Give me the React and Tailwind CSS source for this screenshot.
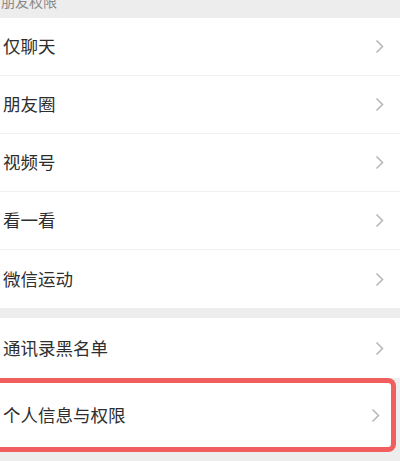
const font = { fontFamily: '"Noto Sans CJK SC", "Noto Sans", sans-serif' };

const Chevron = () => (
  <svg width="9" height="15" viewBox="0 0 9 15" className="shrink-0">
    <polyline points="1.5,1.5 7.5,7.5 1.5,13.5" fill="none" stroke="#b8b8b8" strokeWidth="1.6" />
  </svg>
);

const Row = ({ label, last }) => (
  <div className={`flex h-[58px] items-center justify-between bg-white pl-[3px] pr-[16px] ${last ? '' : 'border-b border-[#f2f2f2]'}`}>
    <span className="text-[17.5px] text-[#2e2e2e]">{label}</span>
    <Chevron />
  </div>
);

export default function App() {
  const group1 = ['仅聊天', '朋友圈', '视频号', '看一看', '微信运动'];

  return (
    <div className="h-[461px] w-[400px] overflow-hidden bg-[#ededed]" style={font}>
      {/* Section header, cut at the top */}
      <div className="h-[18px] overflow-hidden">
        <div className="-mt-[9px] pl-[1px] text-[14px] leading-[20px] text-[#8a8a8a]">朋友权限</div>
      </div>

      <div className="flex flex-col">
        {group1.map((l, i) => (
          <Row key={l} label={l} last={i === group1.length - 1} />
        ))}
      </div>

      <div className="h-[10px]" />

      <div className="flex h-[60px] items-center justify-between bg-white pl-[3px] pr-[16px]">
        <span className="text-[17.5px] text-[#2e2e2e]">通讯录黑名单</span>
        <Chevron />
      </div>

      <div className="mr-[4px] flex h-[74px] items-center justify-between rounded-r-[8px] border-y-[5px] border-r-[5px] border-[#f05e5e] bg-white pl-[3px] pr-[11px]">
        <span className="text-[17.5px] text-[#2e2e2e]">个人信息与权限</span>
        <Chevron />
      </div>
    </div>
  );
}
